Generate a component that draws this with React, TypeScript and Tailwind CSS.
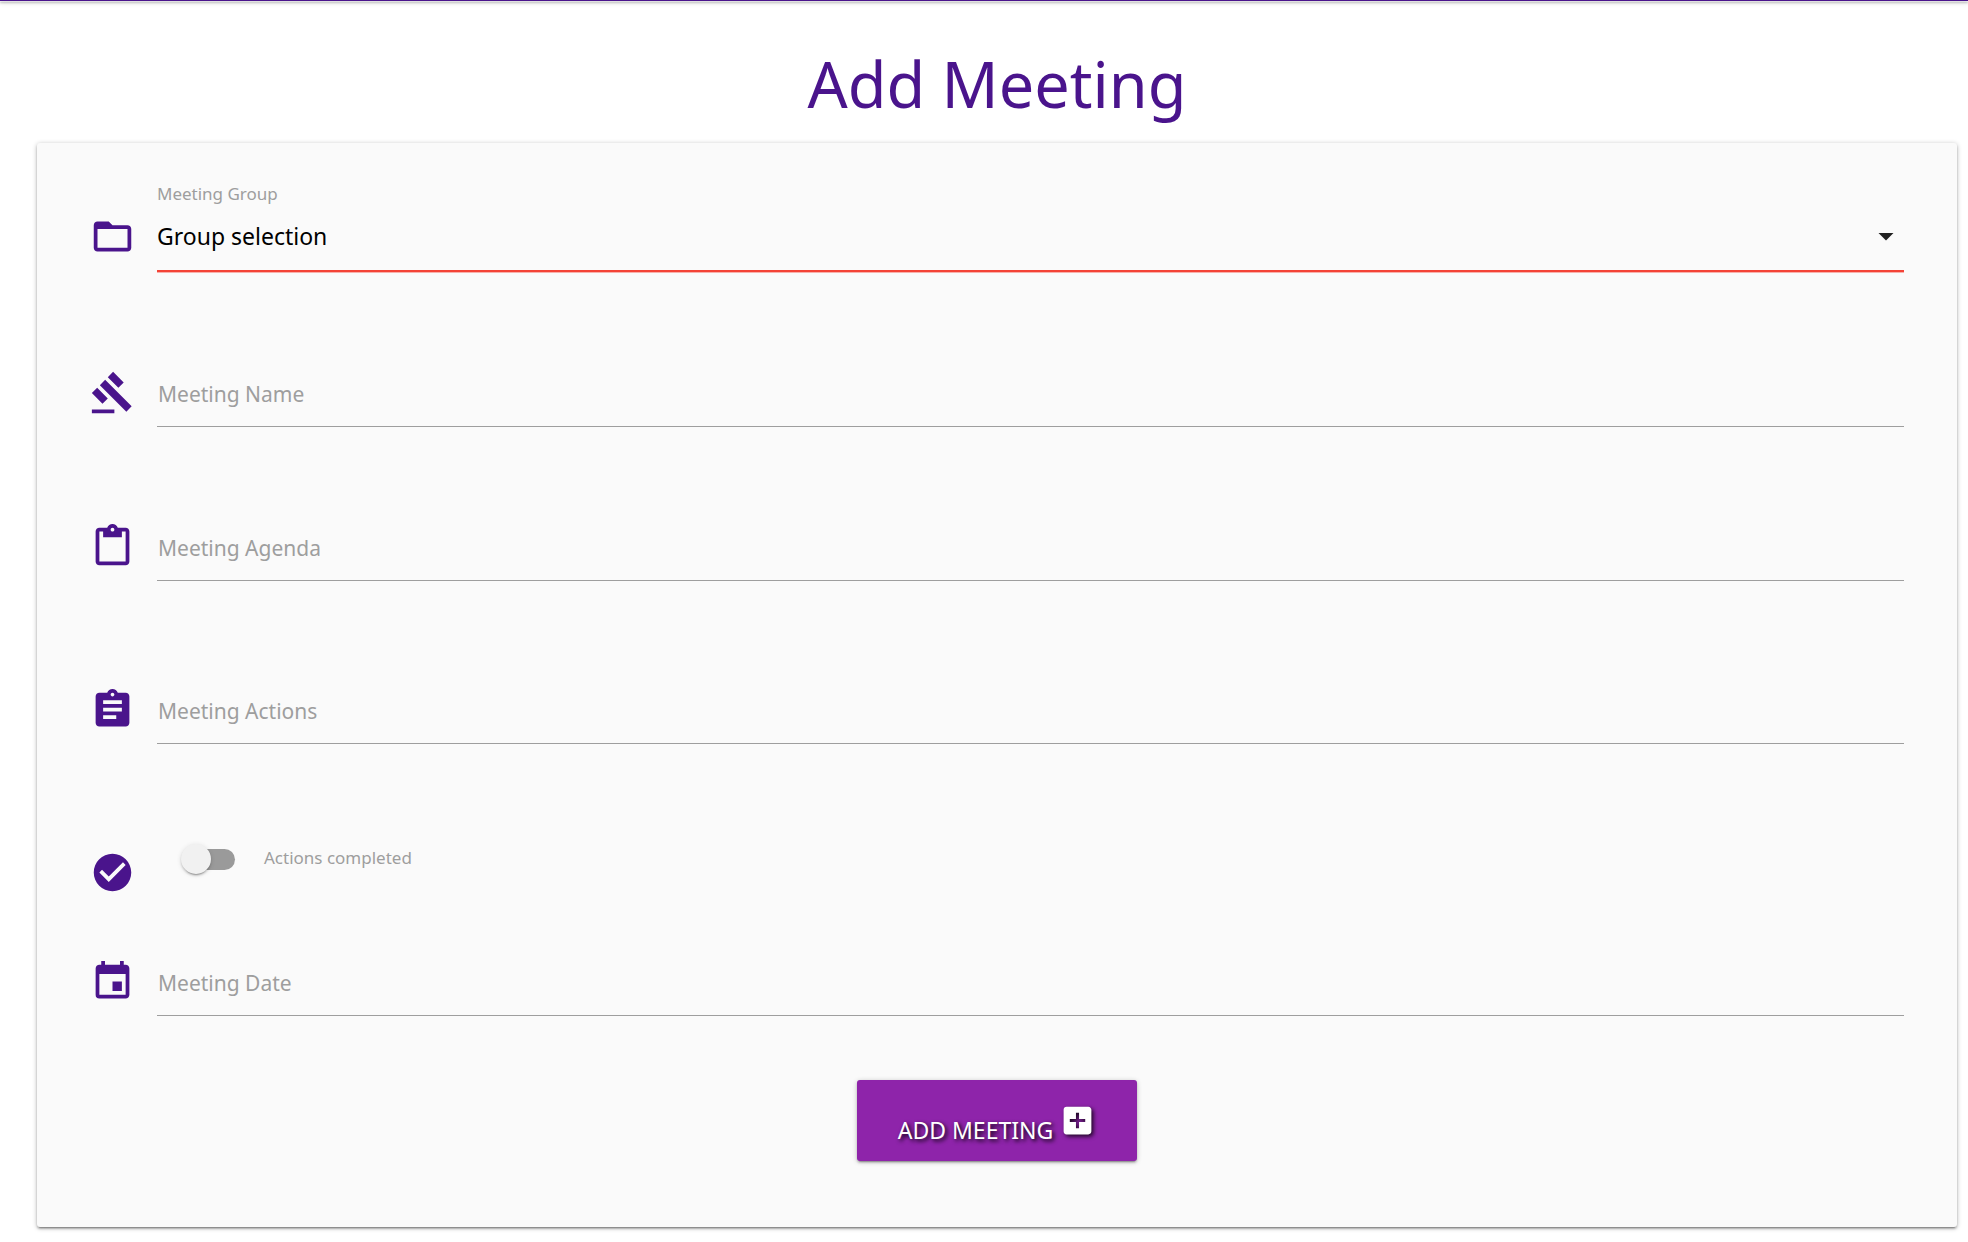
import { useState } from "react";
import type { ReactNode } from "react";
import {
  MdAddBox,
  MdArrowDropDown,
  MdAssignment,
  MdCheckCircle,
  MdContentPaste,
  MdEvent,
  MdFolderOpen,
  MdGavel,
} from "react-icons/md";

function Row({ icon, children }: { icon: ReactNode; children: ReactNode }) {
  return (
    <div className="flex h-[70px] items-center gap-[22px] text-[45px] text-[#4a148c]">
      {icon}
      {children}
    </div>
  );
}

function TextField({ id, label, icon }: { id: string; label: string; icon: ReactNode }) {
  return (
    <Row icon={icon}>
      <input
        id={id}
        type="text"
        aria-label={label}
        placeholder={label}
        className="h-full min-w-0 flex-1 border-b border-[#9e9e9e] bg-transparent pt-1 pl-px text-[21px] text-black outline-none placeholder:text-[#9e9e9e]"
      />
    </Row>
  );
}

export default function App() {
  const [done, setDone] = useState(false);
  return (
    <div className="min-h-screen bg-white font-['Noto_Sans','Open_Sans',sans-serif]">
      <header className="h-px bg-[#4a148c] shadow-[0_2px_2px_0_rgba(0,0,0,0.28),0_3px_1px_-2px_rgba(0,0,0,0.24),0_1px_5px_0_rgba(0,0,0,0.4)]" />
      <main className="pr-[11px] pb-[15px] pl-[37px]">
        <h1 className="pt-[43px] pb-[19px] text-center text-[63px] leading-[80px] font-normal text-[#4a148c]">
          Add Meeting
        </h1>
        <form
          onSubmit={(e) => e.preventDefault()}
          className="rounded-[3px] bg-[#fafafa] pt-[38px] pr-[53px] pb-[66px] pl-[53px] shadow-[0_2px_2px_0_rgba(0,0,0,0.2),0_3px_1px_-2px_rgba(0,0,0,0.2),0_1px_5px_0_rgba(0,0,0,0.28)]"
        >
          <label htmlFor="group" className="block pl-[67px] text-[17px] leading-[26px] text-[#9e9e9e]">
            Meeting Group
          </label>
          <div className="-mt-[6px]">
            <Row icon={<MdFolderOpen />}>
              <div className="relative h-full flex-1">
                <select
                  id="group"
                  className="block h-full w-full appearance-none border-b border-[#f44336] bg-transparent pt-[2px] text-[23px] text-black shadow-[0_1px_0_0_#f44336,0_2px_0_0_rgba(244,67,54,0.4)] outline-none"
                >
                  <option>Group selection</option>
                </select>
                <MdArrowDropDown className="pointer-events-none absolute top-[17px] right-0 size-9 text-black/87" />
              </div>
            </Row>
          </div>
          <div className="mt-[86px]">
            <TextField id="name" label="Meeting Name" icon={<MdGavel />} />
          </div>
          <div className="mt-[84px]">
            <TextField id="agenda" label="Meeting Agenda" icon={<MdContentPaste />} />
          </div>
          <div className="mt-[93px]">
            <TextField id="actions" label="Meeting Actions" icon={<MdAssignment />} />
          </div>
          <div className="mt-[93px]">
            <Row icon={<MdCheckCircle />}>
              <label className="mb-[26px] ml-[24px] flex cursor-pointer items-center">
                <input
                  type="checkbox"
                  checked={done}
                  onChange={() => setDone(!done)}
                  className="peer sr-only"
                />
                <span className="flex w-[54px] items-center peer-checked:[&>span:first-child]:translate-x-6">
                  <span className="z-10 size-[30px] shrink-0 rounded-full bg-[#f1f1f1] shadow-[0_3px_1px_-2px_rgba(0,0,0,0.2),0_2px_2px_0_rgba(0,0,0,0.14),0_1px_5px_0_rgba(0,0,0,0.12)] transition-transform" />
                  <span className="-ml-[22px] h-[21px] flex-1 rounded-full bg-[#9a9a9a]" />
                </span>
                <span className="ml-[29px] pb-[2px] text-[17px] leading-[26px] text-[#9e9e9e]">Actions completed</span>
              </label>
            </Row>
          </div>
          <div className="mt-[39px]">
            <TextField id="date" label="Meeting Date" icon={<MdEvent />} />
          </div>
          <div className="mt-[64px] flex justify-center">
            <button
              type="submit"
              className="flex h-[81px] w-[280px] items-center justify-center rounded-[3px] bg-[#8e24aa] text-[23px] text-white shadow-[0_2px_2px_0_rgba(0,0,0,0.14),0_3px_1px_-2px_rgba(0,0,0,0.2),0_1px_5px_0_rgba(0,0,0,0.24)]"
            >
              <span className="pt-5 [text-shadow:2px_2px_4px_#000000]">ADD MEETING</span>
              <MdAddBox className="ml-[6px] size-[37px] [filter:drop-shadow(2px_2px_2px_rgba(0,0,0,0.8))]" />
            </button>
          </div>
        </form>
      </main>
    </div>
  );
}
